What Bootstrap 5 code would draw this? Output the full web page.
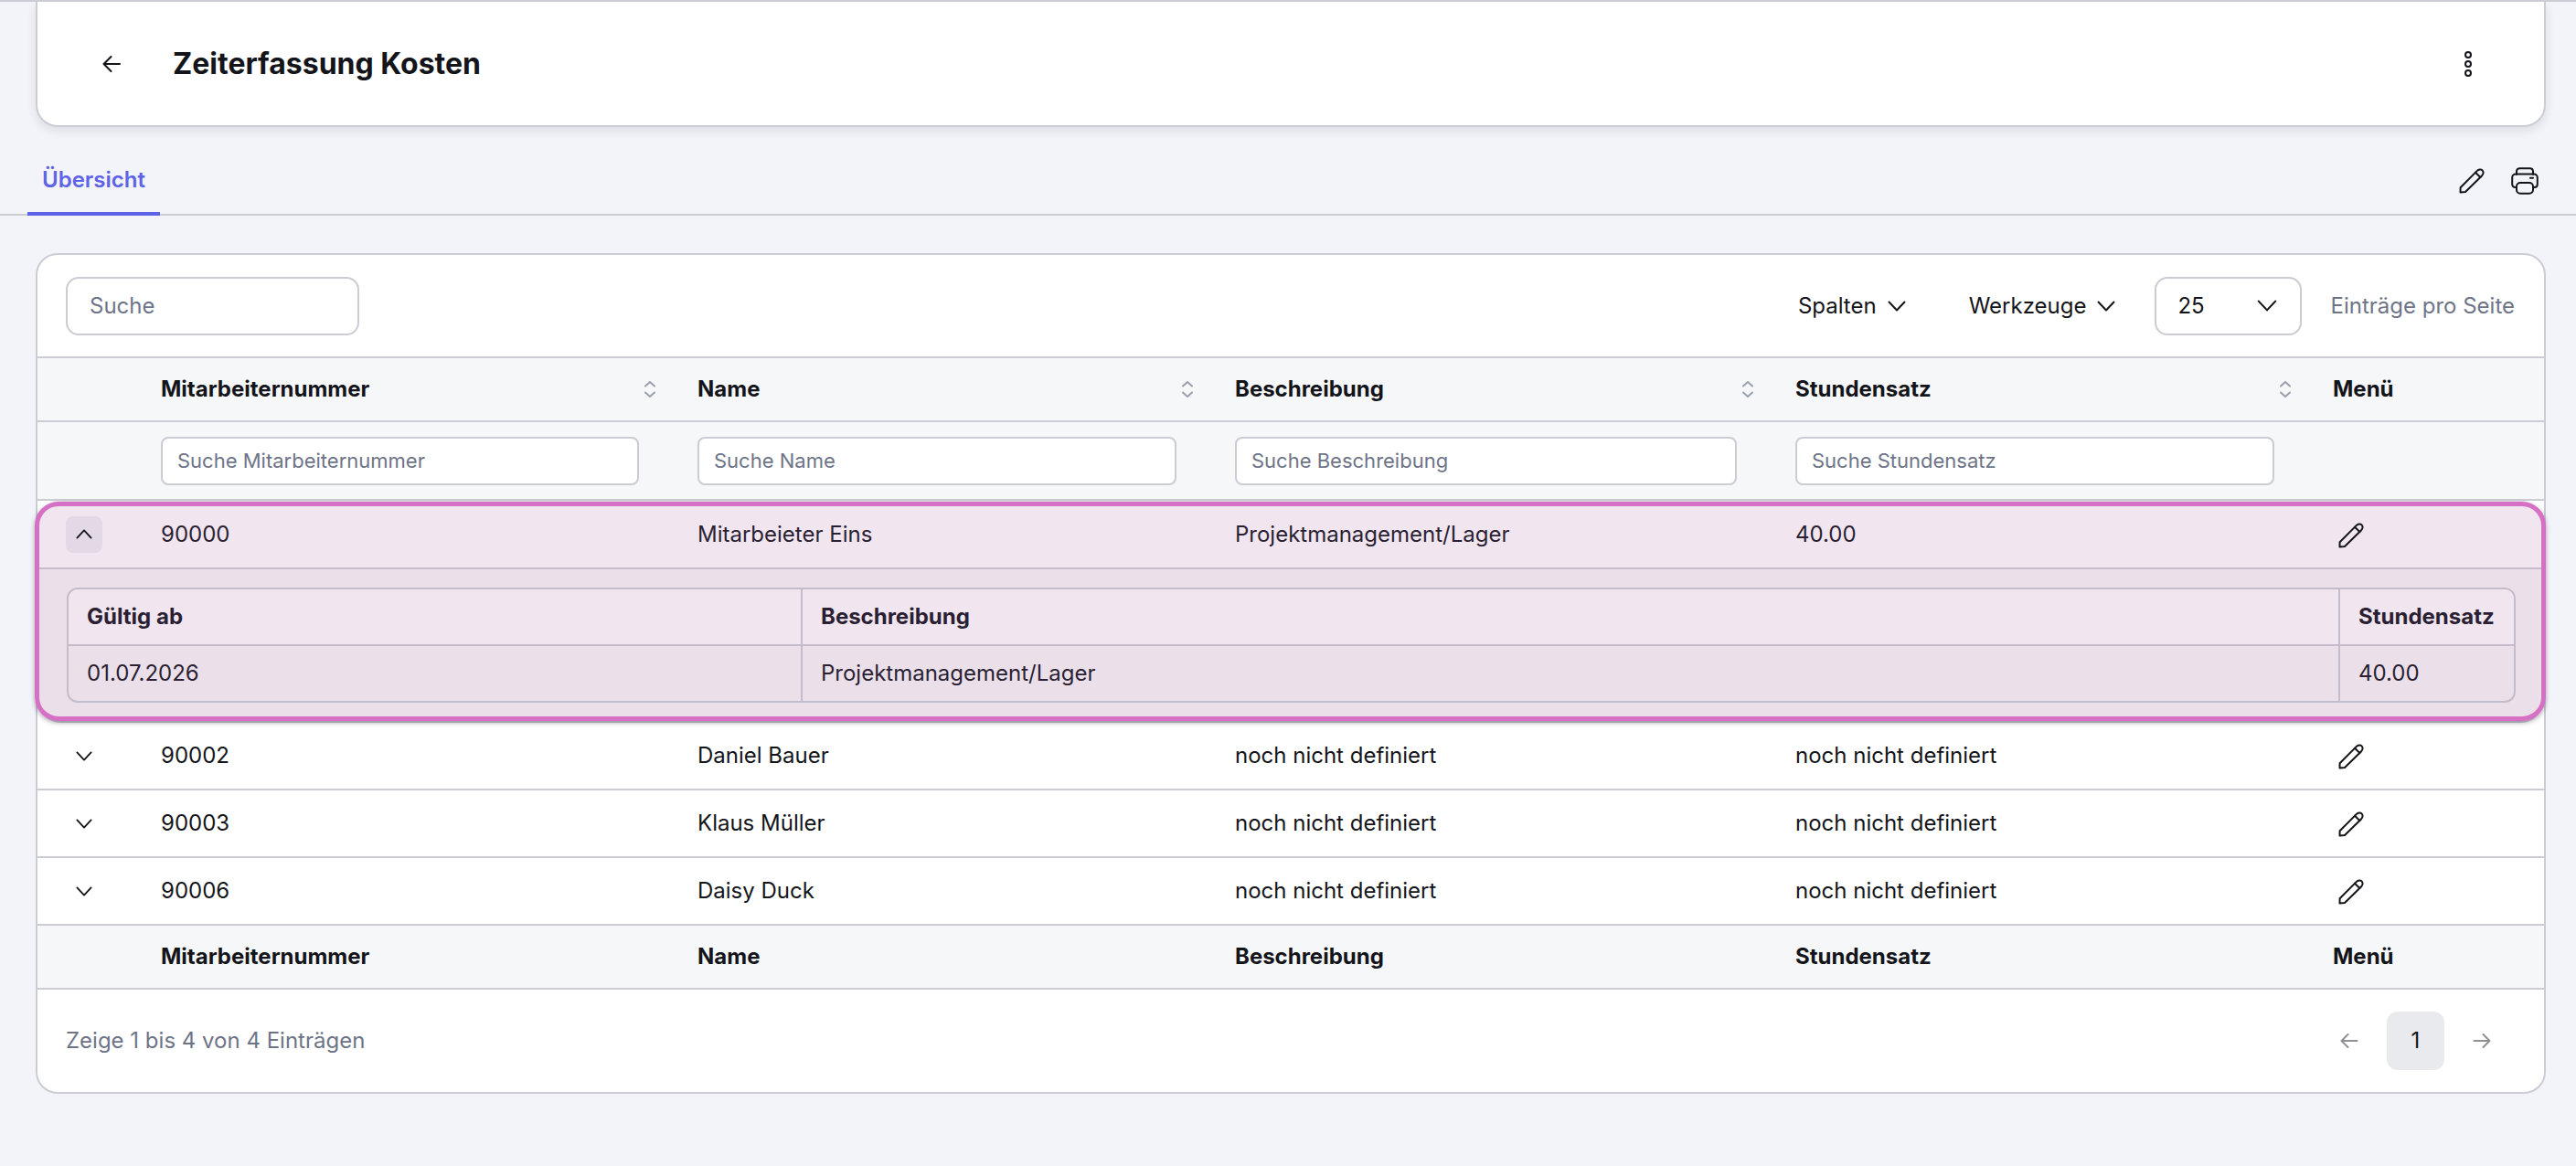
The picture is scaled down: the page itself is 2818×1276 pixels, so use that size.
<!DOCTYPE html>
<html lang="de">
<head>
  <meta charset="UTF-8" />
  <meta name="viewport" content="width=device-width, initial-scale=1.0" />
  <title>Zeiterfassung Kosten</title>
  <link href="https://cdn.jsdelivr.net/npm/bootstrap@5.3.2/dist/css/bootstrap.min.css" rel="stylesheet" />
  <style>
    body {
      background-color: #f3f4f9;
      color: #14151a;
      font-family: Inter, "Liberation Sans", sans-serif;
      font-size: 24px;
      border-top: 2px solid #cbccd4;
      min-height: 100vh;
    }

    svg { display: block; flex: none; }
    .ico { fill: none; stroke: currentColor; stroke-width: 2; stroke-linecap: round; stroke-linejoin: round; }

    /* header card */
    .zk-head {
      height: 137px;
      margin: 0 33px 0 39px;
      padding: 0 78px 0 71px;
      border: 2px solid #cbccd4;
      border-top: 0;
      border-radius: 0 0 24px 24px;
      box-shadow: 0 4px 12px rgba(20, 21, 40, .1);
    }
    .zk-title { font-size: 32px; font-weight: 700; margin: 0 0 0 57px; line-height: 1; }

    /* tab line */
    .zk-tabs { height: 97px; border-bottom: 2px solid #cbccd4; padding: 0 41px 0 30px; }
    .zk-tab {
      display: flex;
      align-items: center;
      height: 78px;
      padding: 4px 16px 0 16px;
      margin-bottom: -2px;
      color: #5e63e6;
      font-weight: 600;
      border-bottom: 4px solid #5e63e6;
      text-decoration: none;
    }
    .zk-tabicons { gap: 29px; margin-bottom: 21px; }

    /* table card */
    .zk-card {
      margin: 41px 33px 0 39px;
      border: 2px solid #cbccd4;
      border-radius: 24px;
    }
    .zk-bar { height: 113px; padding: 0 32px 0 31px; border-bottom: 2px solid #cbccd4; }
    .zk-search {
      width: 321px;
      height: 64px;
      padding: 0 24px;
      font-size: 24px;
      color: #14151a;
      border: 2px solid #cbccd4;
      border-radius: 14px;
    }
    .zk-search::placeholder, .zk-filter::placeholder { color: #6e7488; opacity: 1; }
    .zk-tool {
      display: flex;
      align-items: center;
      gap: 12px;
      padding: 0;
      border: 0;
      font-size: 24px;
      color: #14151a;
    }
    .zk-tool-a { margin-right: 69px; }
    .zk-tool-b { margin-right: 43px; }
    .zk-size {
      width: 161px;
      height: 64px;
      padding: 0 25px 0 23px;
      justify-content: space-between;
      border: 2px solid #cbccd4;
      border-radius: 14px;
    }
    .zk-perpage { color: #6e7488; margin-left: 31px; }

    /* main table */
    .zk-table { table-layout: fixed; border-collapse: separate; border-spacing: 0; margin: 0; --bs-table-bg: transparent; }
    .zk-table > colgroup > .c0 { width: 103px; }
    .zk-table > colgroup > .c1 { width: 587px; }
    .zk-table > colgroup > .c2 { width: 588px; }
    .zk-table > colgroup > .c3 { width: 613px; }
    .zk-table > colgroup > .c4 { width: 588px; }
    .zk-table > colgroup > .c5 { width: 263px; }
    .zk-table > * > tr > * {
      height: 74px;
      padding: 0 32px;
      vertical-align: middle;
      color: #14151a;
      border-bottom: 2px solid #cbccd4;
      box-shadow: none;
    }
    .zk-table > * > tr > th { font-weight: 700; --bs-table-bg: #f6f7f9; }
    .zk-table > thead > .zk-headrow > th, .zk-table > tfoot > tr > th { height: 70px; }
    .zk-table > thead > .zk-filterrow > th { height: 86px; }
    .zk-thin { display: flex; justify-content: space-between; align-items: center; margin-right: -18px; }
    .zk-sort { color: #9aa0ad; }
    .zk-filter {
      width: 100%;
      height: 53px;
      padding: 0 16px;
      font-size: 22px;
      border: 2px solid #cbccd4;
      border-radius: 8px;
    }
    .zk-toggle {
      display: flex;
      align-items: center;
      justify-content: center;
      width: 40px;
      height: 40px;
      margin-left: -1px;
      padding: 0;
      border: 0;
      border-radius: 8px;
      color: #14151a;
    }
    .zk-edit { margin-left: 6px; padding: 0; border: 0; color: #14151a; }

    /* open row with its pink frame */
    .zk-open { position: relative; }
    .zk-open::after {
      content: "";
      position: absolute;
      inset: 1px -2px 2px -3px;
      border: 5px solid #d670c4;
      border-radius: 26px;
      box-shadow: 0 2px 5px rgba(20, 21, 40, .35);
      pointer-events: none;
    }
    .zk-table > .zk-open > tr > td { color: #2a1f33; }
    .zk-table > .zk-open > .zk-openrow > td { height: 75px; --bs-table-bg: #f1e6ef; border-bottom-color: #c3bcca; }
    .zk-table > .zk-open > .zk-openrow > td:first-child { border-top-left-radius: 26px; }
    .zk-table > .zk-open > .zk-openrow > td:last-child { border-top-right-radius: 26px; }
    .zk-table > .zk-open > .zk-detailrow > td {
      height: 168px;
      padding: 20px 31px 20px 32px;
      --bs-table-bg: #ebe0ea;
      border-radius: 0 0 26px 26px;
    }
    .zk-open .zk-toggle { background-color: #e3d8e6; }

    .zk-subwrap { border: 2px solid #c3bcca; border-radius: 12px; overflow: hidden; }
    .zk-sub { table-layout: fixed; border-collapse: separate; border-spacing: 0; margin: 0; --bs-table-bg: transparent; }
    .zk-sub > colgroup > .s0 { width: 803px; }
    .zk-sub > colgroup > .s1 { width: 1682px; }
    .zk-sub > * > tr > * {
      padding: 0 20px;
      vertical-align: middle;
      color: #2a1f33;
      box-shadow: none;
      border-right: 2px solid #c3bcca;
    }
    .zk-sub > * > tr > *:last-child { border-right: 0; }
    .zk-sub > thead > tr > th { height: 62px; font-weight: 700; --bs-table-bg: #f1e6ef; border-bottom: 2px solid #c3bcca; }
    .zk-sub > tbody > tr > td { height: 60px; border-bottom: 0; }

    /* footer */
    .zk-foot { height: 112px; padding: 0 36.5px 0 31px; color: #6e7488; }
    .zk-pager { gap: 10.5px; }
    .zk-pager .page-link {
      display: flex;
      align-items: center;
      justify-content: center;
      width: 63px;
      height: 64px;
      padding: 0;
      font-size: 24px;
      color: #8f9094;
      background: transparent;
      border: 0;
      border-radius: 12px;
    }
    .zk-pager .active .page-link { background-color: #e9eaee; color: #14151a; }
  </style>
</head>
<body>

  <svg width="0" height="0" class="position-absolute">
    <symbol id="i-down" viewBox="0 0 20 12"><path class="ico" d="M1.5 1.5 10 10.500 18.500 1.500"/></symbol>
    <symbol id="i-up" viewBox="0 0 20 12"><path class="ico" d="M1.500 10.500 10 1.500 18.500 10.500"/></symbol>
    <symbol id="i-pen" viewBox="0 0 28 28">
      <path class="ico" d="M1.500 26.500 1.600 21.200 19.600 3.100C21.600 1.100 24.200 1 25.600 2.400 27.100 3.900 26.900 6.500 24.900 8.500L7 26 1.500 26.500Z"/>
      <path class="ico" d="M18 4.700 23.400 10"/>
    </symbol>
    <symbol id="i-sort" viewBox="0 0 12 18">
      <path class="ico" d="M1 5.500 6 1 11 5.500M1 12.500 6 17 11 12.500"/>
    </symbol>
  </svg>

  <!-- Page header -->
  <div class="card d-flex flex-row align-items-center zk-head">
    <svg width="20" height="18" viewBox="0 0 20 18"><path class="ico" d="M9.500 1 1.500 9 9.500 17M1.500 9H19"/></svg>
    <h1 class="zk-title">Zeiterfassung Kosten</h1>
    <svg class="ms-auto" width="10" height="30" viewBox="0 0 10 30">
      <circle class="ico" cx="5" cy="5" r="3"/><circle class="ico" cx="5" cy="15" r="3"/><circle class="ico" cx="5" cy="25" r="3"/>
    </svg>
  </div>

  <!-- Tabs -->
  <div class="d-flex align-items-end justify-content-between zk-tabs">
    <a class="zk-tab" href="#">Übersicht</a>
    <div class="d-flex align-items-center zk-tabicons">
      <svg width="28" height="28"><use href="#i-pen"/></svg>
      <svg width="30" height="30" viewBox="0 0 30 30">
        <path class="ico" d="M6 8V4.500C6 2.500 7.500 1.200 9.500 1.200H20.500C22.500 1.200 24 2.500 24 4.500V8"/>
        <path class="ico" d="M6 22H4.500C2.500 22 1.200 20.500 1.200 18.500V11.500C1.200 9.300 2.800 7.500 5 7.500H25C27.200 7.500 28.800 9.300 28.800 11.500V18.500C28.800 20.500 27.500 22 25.500 22H24"/>
        <rect class="ico" x="6" y="17" width="18" height="11.800" rx="4"/>
        <path class="ico" d="M21 11.700H24"/>
      </svg>
    </div>
  </div>

  <!-- Table card -->
  <div class="card zk-card">
    <div class="d-flex align-items-center zk-bar">
      <input type="text" class="form-control zk-search" placeholder="Suche" />
      <button class="btn zk-tool zk-tool-a ms-auto" type="button">Spalten <svg width="20" height="12"><use href="#i-down"/></svg></button>
      <button class="btn zk-tool zk-tool-b" type="button">Werkzeuge <svg width="20" height="12"><use href="#i-down"/></svg></button>
      <button class="btn zk-tool zk-size" type="button">25 <svg width="22" height="13"><use href="#i-down"/></svg></button>
      <span class="zk-perpage">Einträge pro Seite</span>
    </div>

    <table class="table zk-table">
      <colgroup><col class="c0" /><col class="c1" /><col class="c2" /><col class="c3" /><col class="c4" /><col class="c5" /></colgroup>
      <thead>
        <tr class="zk-headrow">
          <th></th>
          <th><div class="zk-thin">Mitarbeiternummer <svg class="zk-sort" width="12" height="18"><use href="#i-sort"/></svg></div></th>
          <th><div class="zk-thin">Name <svg class="zk-sort" width="12" height="18"><use href="#i-sort"/></svg></div></th>
          <th><div class="zk-thin">Beschreibung <svg class="zk-sort" width="12" height="18"><use href="#i-sort"/></svg></div></th>
          <th><div class="zk-thin">Stundensatz <svg class="zk-sort" width="12" height="18"><use href="#i-sort"/></svg></div></th>
          <th>Menü</th>
        </tr>
        <tr class="zk-filterrow">
          <th></th>
          <th><input type="text" class="form-control zk-filter" placeholder="Suche Mitarbeiternummer" /></th>
          <th><input type="text" class="form-control zk-filter" placeholder="Suche Name" /></th>
          <th><input type="text" class="form-control zk-filter" placeholder="Suche Beschreibung" /></th>
          <th><input type="text" class="form-control zk-filter" placeholder="Suche Stundensatz" /></th>
          <th></th>
        </tr>
      </thead>
      <tbody class="zk-open">
        <tr class="zk-openrow">
          <td><button class="btn zk-toggle" type="button"><svg width="18" height="11"><use href="#i-up"/></svg></button></td>
          <td>90000</td>
          <td>Mitarbeieter Eins</td>
          <td>Projektmanagement/Lager</td>
          <td>40.00</td>
          <td><button class="btn zk-edit" type="button"><svg width="28" height="28"><use href="#i-pen"/></svg></button></td>
        </tr>
        <tr class="zk-detailrow">
          <td colspan="6">
            <div class="zk-subwrap">
              <table class="table zk-sub">
                <colgroup><col class="s0" /><col class="s1" /><col /></colgroup>
                <thead><tr><th>Gültig ab</th><th>Beschreibung</th><th>Stundensatz</th></tr></thead>
                <tbody><tr><td>01.07.2026</td><td>Projektmanagement/Lager</td><td>40.00</td></tr></tbody>
              </table>
            </div>
          </td>
        </tr>
      </tbody>
      <tbody>
        <tr>
          <td><button class="btn zk-toggle" type="button"><svg width="18" height="11"><use href="#i-down"/></svg></button></td>
          <td>90002</td>
          <td>Daniel Bauer</td>
          <td>noch nicht definiert</td>
          <td>noch nicht definiert</td>
          <td><button class="btn zk-edit" type="button"><svg width="28" height="28"><use href="#i-pen"/></svg></button></td>
        </tr>
        <tr>
          <td><button class="btn zk-toggle" type="button"><svg width="18" height="11"><use href="#i-down"/></svg></button></td>
          <td>90003</td>
          <td>Klaus Müller</td>
          <td>noch nicht definiert</td>
          <td>noch nicht definiert</td>
          <td><button class="btn zk-edit" type="button"><svg width="28" height="28"><use href="#i-pen"/></svg></button></td>
        </tr>
        <tr>
          <td><button class="btn zk-toggle" type="button"><svg width="18" height="11"><use href="#i-down"/></svg></button></td>
          <td>90006</td>
          <td>Daisy Duck</td>
          <td>noch nicht definiert</td>
          <td>noch nicht definiert</td>
          <td><button class="btn zk-edit" type="button"><svg width="28" height="28"><use href="#i-pen"/></svg></button></td>
        </tr>
      </tbody>
      <tfoot>
        <tr>
          <th></th>
          <th>Mitarbeiternummer</th>
          <th>Name</th>
          <th>Beschreibung</th>
          <th>Stundensatz</th>
          <th>Menü</th>
        </tr>
      </tfoot>
    </table>

    <div class="d-flex align-items-center justify-content-between zk-foot">
      <span>Zeige 1 bis 4 von 4 Einträgen</span>
      <ul class="pagination mb-0 zk-pager">
        <li class="page-item"><a class="page-link" href="#"><svg width="20" height="16" viewBox="0 0 20 16"><path class="ico" d="M8.500 1 1.500 8 8.500 15M1.500 8H18.500"/></svg></a></li>
        <li class="page-item active"><a class="page-link" href="#">1</a></li>
        <li class="page-item"><a class="page-link" href="#"><svg width="20" height="16" viewBox="0 0 20 16"><path class="ico" d="M11.500 1 18.500 8 11.500 15M18.500 8H1.500"/></svg></a></li>
      </ul>
    </div>
  </div>

  <script src="https://cdn.jsdelivr.net/npm/bootstrap@5.3.2/dist/js/bootstrap.bundle.min.js"></script>
</body>
</html>
